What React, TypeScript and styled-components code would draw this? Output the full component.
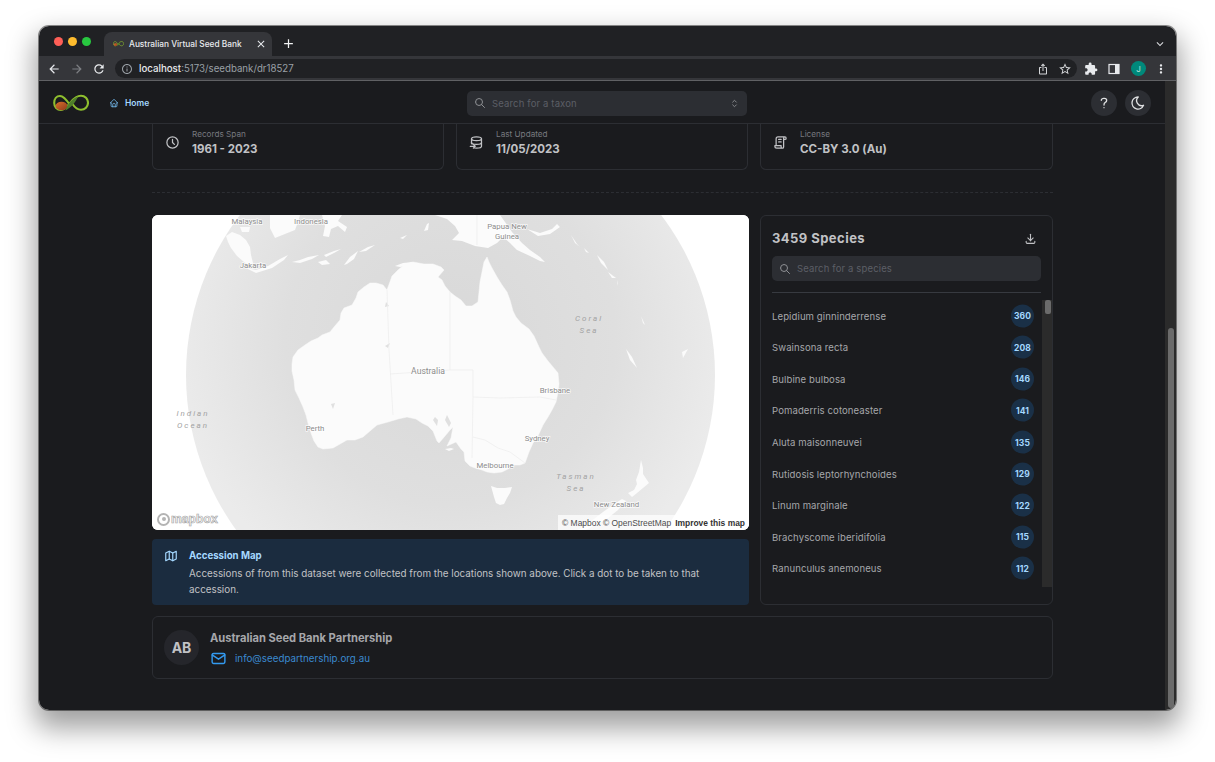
import styled, { createGlobalStyle } from 'styled-components';
import {
  TbClock,
  TbDownload,
  TbHome,
  TbLicense,
  TbMail,
  TbMap,
  TbMoon,
  TbQuestionMark,
  TbSearch,
  TbSelector,
} from 'react-icons/tb';
import {
  MdAdd,
  MdArrowBack,
  MdArrowForward,
  MdClose,
  MdExpandMore,
  MdExtension,
  MdInfoOutline,
  MdIosShare,
  MdMoreVert,
  MdRefresh,
  MdStarBorder,
} from 'react-icons/md';

const GlobalStyle = createGlobalStyle`
  html, body {
    margin: 0;
    height: 762px;
    overflow: hidden;
    background: #ffffff;
    font-family: Inter, 'Liberation Sans', sans-serif;
  }
`;

const Desktop = styled.div`
  padding: 26px 39px 0;
`;

const BrowserWindow = styled.div`
  width: 1137px;
  height: 684px;
  display: flex;
  flex-direction: column;
  border-radius: 10px;
  overflow: hidden;
  box-shadow: 0 14px 28px 4px rgba(0, 0, 0, 0.38), 0 0 0 1px rgba(70, 70, 70, 0.6);
`;

const TabStrip = styled.div`
  height: 30px;
  flex-shrink: 0;
  display: flex;
  align-items: flex-end;
  padding: 0 9px 0 14px;
  background: #202124;
`;

const Lights = styled.div`
  display: flex;
  gap: 5px;
  align-self: center;
  margin: 0 13.5px 0 0.5px;
`;

const Light = styled.span<{ color: string }>`
  width: 9px;
  height: 9px;
  border-radius: 50%;
  background: ${({ color }) => color};
`;

const Tab = styled.div`
  width: 168px;
  height: 24px;
  display: flex;
  align-items: center;
  gap: 5px;
  padding: 0 5px 0 9px;
  box-sizing: border-box;
  border-radius: 8px 8px 0 0;
  background: #35363a;
  color: #e8eaed;
  font-size: 8.3px;
  font-weight: 500;
  white-space: nowrap;

  svg {
    flex-shrink: 0;
  }

  svg:last-child {
    margin-left: auto;
    font-size: 12px;
  }
`;

const NewTab = styled.div`
  align-self: center;
  margin: 5px 0 0 9px;
  display: flex;
  color: #f1f3f4;
  font-size: 15px;
`;

const StripEnd = styled.div`
  margin-left: auto;
  align-self: center;
  display: flex;
  color: #d4d6d9;
  font-size: 14px;
  transform: translateY(3px);
`;

const Toolbar = styled.div`
  height: 25px;
  flex-shrink: 0;
  display: flex;
  align-items: center;
  padding: 1px 8px 0;
  background: #35363a;
  border-bottom: 1px solid #606164;
  box-sizing: border-box;
  color: #e8eaed;
`;

const NavIcon = styled.span<{ $dim?: boolean; $gap?: number }>`
  display: flex;
  font-size: 14px;
  margin-right: ${({ $gap }) => $gap ?? 0}px;
  color: ${({ $dim }) => ($dim ? '#7d7f83' : '#e8eaed')};
`;

const Omnibox = styled.div`
  width: 963px;
  height: 19px;
  display: flex;
  align-items: center;
  gap: 6px;
  box-sizing: border-box;
  padding: 0 5px 0 6px;
  margin-right: 7px;
  border-radius: 10px;
  background: #202124;
  font-size: 9.7px;
  color: #9aa0a6;

  b {
    font-weight: 500;
    color: #e8eaed;
  }
`;

const OmniEnd = styled.div`
  margin-left: auto;
  display: flex;
  align-items: center;
  gap: 9px;
  font-size: 12px;
  color: #d4d6d9;
`;

const Profile = styled.span`
  width: 15px;
  height: 15px;
  margin: 0 8px 0 1px;
  display: flex;
  align-items: center;
  justify-content: center;
  border-radius: 50%;
  background: #00897b;
  color: #b7e4dc;
  font-size: 8px;
`;

const Viewport = styled.div`
  flex: 1;
  min-height: 0;
  display: flex;
`;

const Page = styled.div`
  flex: 1;
  min-width: 0;
  display: flex;
  flex-direction: column;
  background: #1a1b1e;
  color: #c1c2c5;
`;

const Scrollbar = styled.div`
  width: 11px;
  display: flex;
  flex-direction: column;
  justify-content: flex-end;
  padding: 0 2px 2px 3px;
  box-sizing: border-box;
  background: #2b2b2b;
`;

const Thumb = styled.div`
  height: 380px;
  border-radius: 3px;
  background: #6b6b6b;
`;

const Header = styled.header`
  height: 43px;
  flex-shrink: 0;
  display: grid;
  grid-template-columns: 414px 280px 1fr;
  align-items: center;
  padding: 2px 14px 0;
  box-sizing: border-box;
  border-bottom: 1px solid #2c2e33;
`;

const HeaderLeft = styled.div`
  display: flex;
  align-items: center;
`;

const HomeLink = styled.a`
  display: flex;
  align-items: center;
  gap: 6px;
  margin-left: 20px;
  font-size: 8.5px;
  font-weight: 600;
  color: #a5d8ff;

  svg {
    font-size: 10px;
    color: #74b9ec;
  }
`;

const HeaderRight = styled.div`
  display: flex;
  justify-content: flex-end;
  gap: 8px;
`;

const RoundButton = styled.button`
  width: 26px;
  height: 26px;
  padding: 0;
  display: flex;
  align-items: center;
  justify-content: center;
  border: 0;
  border-radius: 50%;
  background: #2c2e33;
  color: #dfe0e2;
  font-size: 16px;
`;

const SearchBox = styled.div`
  height: 25px;
  display: flex;
  align-items: center;
  gap: 6px;
  padding: 0 7px;
  box-sizing: border-box;
  border-radius: 5px;
  background: #2c2e33;
  color: #8d8f93;
  font-size: 12px;

  > svg:last-child:not(:first-child) {
    margin-left: auto;
    font-size: 11px;
  }
`;

const Placeholder = styled.span`
  font-size: 9.5px;
  letter-spacing: 0.15px;
  color: #5c5f66;
`;

const Main = styled.main`
  flex: 1;
  min-height: 0;
  overflow: hidden;
  padding: 0 112px 0 113px;
`;

const Stats = styled.div`
  display: grid;
  grid-template-columns: 292px 292px 1fr;
  gap: 12px;
`;

const StatCard = styled.div`
  height: 46px;
  display: flex;
  align-items: center;
  gap: 12px;
  padding: 0 12px;
  box-sizing: border-box;
  border: 1px solid #2c2e33;
  border-top: 0;
  border-radius: 0 0 6px 6px;

  > svg {
    font-size: 15px;
    flex-shrink: 0;
    color: #c1c2c5;
    transform: translateY(-4px);
  }
`;

const StatText = styled.div`
  display: flex;
  flex-direction: column;
  gap: 2px;
  transform: translateY(-4.5px);
`;

const StatLabel = styled.span`
  font-size: 8.2px;
  line-height: 11px;
  color: #77797e;
`;

const StatValue = styled.span`
  font-size: 11.5px;
  line-height: 14px;
  font-weight: 700;
  color: #c1c2c5;
`;

const Divider = styled.hr`
  margin: 22px 0 22px;
  border: 0;
  border-top: 1px dashed #2c2e33;
`;

const Columns = styled.div`
  display: grid;
  grid-template-columns: 597px 293px;
  gap: 11px;
`;

const LeftColumn = styled.div`
  display: flex;
  flex-direction: column;
  gap: 9px;
`;

const MapFrame = styled.div`
  position: relative;
  height: 315px;
  border-radius: 6px;
  overflow: hidden;
  background: #ffffff;

  svg {
    display: block;
  }
`;

const MapLogo = styled.div`
  position: absolute;
  left: 5px;
  bottom: 4px;
  display: flex;
  align-items: center;
  gap: 1px;
  font-family: 'Liberation Sans', sans-serif;
  font-size: 12.2px;
  font-weight: 700;
  color: #ffffff;
  -webkit-text-stroke: 0.7px #a8a8a8;
`;

const MapLogoMark = styled.span`
  width: 9px;
  height: 9px;
  display: flex;
  align-items: center;
  justify-content: center;
  border-radius: 50%;
  border: 2px solid #b4b4b4;
  background: #ffffff;

  &::after {
    content: '';
    width: 4px;
    height: 4px;
    border-radius: 50%;
    background: #b4b4b4;
  }
`;

const Attribution = styled.div`
  position: absolute;
  right: 0;
  bottom: 0;
  height: 15px;
  display: flex;
  align-items: center;
  gap: 4px;
  padding: 0 4px;
  background: rgba(255, 255, 255, 0.7);
  font-family: 'Liberation Sans', sans-serif;
  font-size: 8.45px;
  color: #4d4d4d;

  b {
    color: #333333;
  }
`;

const Alert = styled.div`
  height: 66px;
  display: flex;
  gap: 11px;
  padding: 10px 12px;
  box-sizing: border-box;
  border-radius: 4px;
  background: #1b2c3f;

  > svg {
    font-size: 14px;
    color: #a5d8ff;
    flex-shrink: 0;
  }
`;

const AlertBody = styled.div`
  width: 530px;
`;

const AlertTitle = styled.div`
  font-size: 9.7px;
  line-height: 13px;
  font-weight: 700;
  color: #a5d8ff;
`;

const AlertText = styled.p`
  margin: 4px 0 0;
  font-size: 9.83px;
  line-height: 15.5px;
  color: #c1c2c5;
`;

const SpeciesPanel = styled.section`
  height: 390px;
  padding: 11px 11px 0;
  box-sizing: border-box;
  border: 1px solid #2c2e33;
  border-radius: 6px;
`;

const PanelHead = styled.div`
  height: 22px;
  margin-bottom: 7px;
  display: flex;
  align-items: center;
  justify-content: space-between;
  padding-right: 4px;

  svg {
    font-size: 13px;
    color: #c1c2c5;
  }
`;

const PanelTitle = styled.h2`
  margin: 0;
  font-size: 13px;
  font-weight: 700;
  letter-spacing: 0.45px;
  color: #c1c2c5;
`;

const PanelRule = styled.div`
  margin: 11px 0 7px;
  border-top: 1px solid #373a40;
`;

const ListArea = styled.div`
  height: 287px;
  margin-right: -11px;
  display: flex;
  justify-content: space-between;
`;

const SpeciesList = styled.ul`
  width: 262px;
  margin: 0.4px 0 0;
  padding: 0;
  list-style: none;
`;

const SpeciesRow = styled.li`
  height: 31.6px;
  display: flex;
  align-items: center;
  justify-content: space-between;
  font-size: 9.55px;
  letter-spacing: 0.1px;
  color: #a6a7ab;
`;

const CountBadge = styled.span`
  width: 23px;
  height: 23px;
  display: flex;
  align-items: center;
  justify-content: center;
  border-radius: 50%;
  background: #1a3047;
  color: #a5d8ff;
  font-size: 8.5px;
  font-weight: 700;
  transform: translateY(-0.5px);
`;

const ListTrack = styled.div`
  width: 10px;
  padding: 0 1px 0 3px;
  box-sizing: border-box;
  background: #2b2b2b;
`;

const ListThumb = styled.div`
  height: 14px;
  border-radius: 2px;
  background: #6b6b6b;
`;

const OwnerCard = styled.section`
  height: 63px;
  margin-top: 11px;
  display: flex;
  align-items: center;
  gap: 11px;
  padding: 0 11px;
  box-sizing: border-box;
  border: 1px solid #2c2e33;
  border-radius: 6px;
`;

const Avatar = styled.div`
  width: 35px;
  height: 35px;
  display: flex;
  align-items: center;
  justify-content: center;
  border-radius: 50%;
  background: #25262b;
  color: #c1c2c5;
  font-size: 14px;
  font-weight: 700;
`;

const OwnerInfo = styled.div`
  padding-top: 2px;
`;

const OwnerName = styled.div`
  font-size: 11.15px;
  line-height: 14px;
  font-weight: 700;
  color: #a6a7ab;
`;

const OwnerMail = styled.a`
  margin-top: 5px;
  display: flex;
  align-items: center;
  gap: 8px;
  font-size: 9.8px;
  color: #3b8ad0;

  svg {
    font-size: 17px;
    color: #339af0;
  }
`;

const SidePanelGlyph = () => (
  <svg width="12" height="12" viewBox="0 0 12 12">
    <rect x="1" y="1.5" width="10" height="9" fill="none" stroke="#e8eaed" strokeWidth="1.2" />
    <rect x="7" y="1.5" width="4" height="9" fill="#e8eaed" />
  </svg>
);

// tabler's newer database-import has its arrow on the right, the picture has it on the left
const DatabaseIcon = () => (
  <svg
    width="15"
    height="15"
    viewBox="0 0 24 24"
    fill="none"
    stroke="currentColor"
    strokeWidth="2"
    strokeLinecap="round"
    strokeLinejoin="round"
  >
    <ellipse cx="12" cy="6" rx="8" ry="3" />
    <path d="M4 6v6c0 1.600 3.600 3 8 3s8-1.400 8-3V6" />
    <path d="M20 12v6c0 1.600-3.600 3-8 3-1 0-2-.1-3-.2" />
    <path d="M4 12v2" />
    <path d="M2 18h8M7 15l3 3-3 3" />
  </svg>
);

const Logo = ({ width }: { width: number }) => (
  <svg width={width} viewBox="0 0 36 18">
    <defs>
      <linearGradient id={`seed-${width}`} x1="0" y1="0" x2="1" y2="1">
        <stop offset="0" stopColor="#d9702a" />
        <stop offset="1" stopColor="#8f3a1e" />
      </linearGradient>
    </defs>
    <path
      d="M17 11C13 5 10 2 7 2 3.500 2 1.200 5 1.200 9c0 4 2.800 7 6.800 7 3 0 6-3 10-8 3-4 6-6.300 10-6.300 4 0 7 3.300 7 7 0 3.800-3 7.100-7 7.100-3.500 0-6.500-2.800-8.500-5.800"
      fill="none"
      stroke="#8fbf2e"
      strokeWidth="2.1"
      strokeLinecap="round"
    />
    <ellipse cx="8.500" cy="12" rx="6" ry="4.300" fill={`url(#seed-${width})`} />
    <path d="M12.500 16.500C14 10 19 5 25 2.500 23 8 18 13.500 12.500 16.500Z" fill="#4f7f2a" />
  </svg>
);

const AUSTRALIA =
  'M387 290L383 285 376 283 370 283 364 287 358 292 356 298 352 305 344 308 341 313 340 320 334 327 330 332 322 335 318 338 311 341 305 345 298 350 293 357 292 364 292 371 294 380 295 390 299 398 303 407 306 415 308 423 311 433 314 441 318 447 323 449 333 448 340 444 347 440 355 440 363 437 370 431 377 425 388 422 398 419 407 417 416 419 422 423 428 426 433 431 437 441 439 443 445 436 450 430 453 427 451 438 447 446 456 442 461 449 464 452 465 461 470 466 475 468 482 470 487 472 494 473 502 472 508 469 513 465 520 465 525 463 529 452 533 443 538 436 543 425 548 417 552 410 556 402 558 392 559 384 558 373 553 367 548 361 542 353 539 347 534 336 529 329 521 323 516 317 513 311 510 300 507 292 502 285 497 277 492 268 489 262 487 257 484 262 482 272 480 282 479 292 478 302 472 306 466 306 461 300 455 296 450 292 445 286 442 280 438 277 444 270 441 267 433 264 424 264 413 262 405 264 398 270 392 276Z';

const LAND_SHAPES = [
  // Tasmania and the south coast islands
  'M491 486L497 488 505 488 512 487 510 493 507 498 504 504 500 505 496 503 494 497Z',
  'M445 449L451 448 454 449 449 451Z',
  // New Zealand
  'M641 460L643 468 643 474 649 483 643 488 637 493 632 497 628 493 634 490 637 484 636 480 639 472Z',
  'M622 499L626 501 618 510 608 518 597 524 586 530 578 530 590 522 603 512 614 504Z',
  // New Guinea and the islands beside it
  'M435 215L447 219 455 226 459 233 452 240 462 241 475 246 488 248 497 243 503 237 510 243 517 250 530 256 540 261 545 262 540 257 530 250 522 243 512 232 505 222 500 215Z',
  'M527 229L540 233 552 229 557 224 560 227 550 234 538 236Z',
  // Indonesia
  'M226 236L232 232 240 235 246 240 250 247 251 255 253 263 250 266 244 262 237 256 231 248 228 242Z',
  'M240 227L250 227 249 232 242 232Z',
  'M270 215L270 228 275 238 285 234 295 230 298 222 300 215Z',
  'M323 236L325 226 322 215 342 215 338 221 347 227 345 232 338 226 331 229 329 237Z',
  'M246 268L256 270 268 266 280 259 288 255 284 260 272 268 256 273Z',
  'M292 262L300 260 308 257 319 255 312 259 300 263Z',
  'M324 255L334 251 341 249 334 253 326 257Z',
  'M318 262L326 260 330 264 322 265Z',
  'M344 265L350 257 358 251 354 259 347 264Z',
  'M359 252L368 247 375 245 366 251Z',
  'M400 238L407 235 403 239Z',
  'M424 231L427 224 429 223 428 230Z',
  'M395 266L403 263 413 262 410 265 400 267Z',
  // Solomon and Pacific islands
  'M571 235L577 244 580 247 575 243Z',
  'M584 248L589 253 586 252Z',
  'M597 255L604 262 608 270 601 263Z',
  'M608 272L616 278 612 278Z',
  'M617 280L618 286 617 283Z',
  'M641 316L645 325 643 323Z',
  'M626 349L632 357 637 368 630 360Z',
  'M682 352L688 349 683 358Z',
];

const LAKES = [
  'M435 417L438 420 437 426 433 420Z',
  'M385 346L390 343 388 348Z',
  'M386 302L389 306 385 307Z',
  'M331 404L335 403 333 409Z',
  'M447 415L451 423 449 427 445 420Z',
];

const BORDERS = [
  'M477 215V245',
  'M387 290L389 350 393 415',
  'M390 374L450 370',
  'M450 292L450 370 473 370 473 397 472 458',
  'M473 397L500 398 540 397 556 400',
  'M473 437L485 440 498 448 510 452 525 463',
];

const MapLabel = styled.text<{ $ocean?: boolean; $size?: number }>`
  font-family: Roboto, 'Liberation Sans', sans-serif;
  font-size: ${({ $size }) => $size ?? 7.8}px;
  font-style: ${({ $ocean }) => ($ocean ? 'italic' : 'normal')};
  letter-spacing: ${({ $ocean }) => ($ocean ? '2px' : '0')};
  fill: ${({ $ocean }) => ($ocean ? '#a3a3a3' : '#8c8c8c')};
  text-anchor: middle;
  paint-order: stroke;
  stroke: ${({ $ocean }) => ($ocean ? 'none' : 'rgba(255, 255, 255, 0.8)')};
  stroke-width: 1.5px;
`;

const places: [string, number, number, number?][] = [
  ['Malaysia', 247, 224],
  ['Indonesia', 311, 224],
  ['Jakarta', 253, 268],
  ['Papua New', 507, 229],
  ['Guinea', 507, 238.5],
  ['Australia', 428, 373.5, 8.6],
  ['Perth', 315, 431],
  ['Brisbane', 555, 393],
  ['Sydney', 537, 441],
  ['Melbourne', 495, 468],
  ['New Zealand', 616.5, 506.5],
];

const seas: [string, number, number][] = [
  ['Indian', 193, 416],
  ['Ocean', 193, 428],
  ['Coral', 589, 321],
  ['Sea', 589, 333],
  ['Tasman', 576, 479],
  ['Sea', 576, 491],
];

const AustraliaMap = () => (
  <svg width="597" height="315" viewBox="152 215 597 315">
    <defs>
      <radialGradient id="ocean" cx="450" cy="340" r="275" gradientUnits="userSpaceOnUse">
        <stop offset="0" stopColor="#d8d8d8" />
        <stop offset="0.6" stopColor="#dfdfdf" />
        <stop offset="1" stopColor="#ebebeb" />
      </radialGradient>
    </defs>
    <rect x="152" y="215" width="597" height="315" fill="#ffffff" />
    <circle cx="450.5" cy="375" r="264.5" fill="url(#ocean)" />
    <path d={AUSTRALIA} fill="#fbfbfb" stroke="#fbfbfb" strokeWidth="0.5" strokeLinejoin="round" />
    {LAND_SHAPES.map(d => (
      <path key={d} d={d} fill="#fbfbfb" />
    ))}
    {LAKES.map(d => (
      <path key={d} d={d} fill="#e0e0e0" />
    ))}
    {BORDERS.map(d => (
      <path key={d} d={d} fill="none" stroke="#ececec" strokeWidth="0.7" />
    ))}
    {places.map(([name, x, y, size]) => (
      <MapLabel key={name} x={x} y={y} $size={size}>
        {name}
      </MapLabel>
    ))}
    {seas.map(([name, x, y]) => (
      <MapLabel key={name + y} x={x} y={y} $ocean $size={8}>
        {name}
      </MapLabel>
    ))}
  </svg>
);

const species: [string, number][] = [
  ['Lepidium ginninderrense', 360],
  ['Swainsona recta', 208],
  ['Bulbine bulbosa', 146],
  ['Pomaderris cotoneaster', 141],
  ['Aluta maisonneuvei', 135],
  ['Rutidosis leptorhynchoides', 129],
  ['Linum marginale', 122],
  ['Brachyscome iberidifolia', 115],
  ['Ranunculus anemoneus', 112],
];

const App = () => (
  <>
    <GlobalStyle />
    <Desktop>
      <BrowserWindow>
        <TabStrip>
          <Lights>
            <Light color="#ff5f57" />
            <Light color="#febc2e" />
            <Light color="#28c840" />
          </Lights>
          <Tab>
            <Logo width={11} />
            Australian Virtual Seed Bank
            <MdClose />
          </Tab>
          <NewTab>
            <MdAdd />
          </NewTab>
          <StripEnd>
            <MdExpandMore />
          </StripEnd>
        </TabStrip>
        <Toolbar>
          <NavIcon $gap={9}>
            <MdArrowBack />
          </NavIcon>
          <NavIcon $gap={8} $dim>
            <MdArrowForward />
          </NavIcon>
          <NavIcon $gap={9}>
            <MdRefresh />
          </NavIcon>
          <Omnibox>
            <MdInfoOutline size={12} />
            <span>
              <b>localhost</b>:5173/seedbank/dr18527
            </span>
            <OmniEnd>
              <MdIosShare />
              <MdStarBorder size={14} />
            </OmniEnd>
          </Omnibox>
          <NavIcon $gap={10}>
            <MdExtension />
          </NavIcon>
          <NavIcon $gap={10}>
            <SidePanelGlyph />
          </NavIcon>
          <Profile>J</Profile>
          <NavIcon>
            <MdMoreVert />
          </NavIcon>
        </Toolbar>
        <Viewport>
          <Page>
            <Header>
              <HeaderLeft>
                <Logo width={36} />
                <HomeLink>
                  <TbHome />
                  Home
                </HomeLink>
              </HeaderLeft>
              <SearchBox>
                <TbSearch />
                <Placeholder>Search for a taxon</Placeholder>
                <TbSelector />
              </SearchBox>
              <HeaderRight>
                <RoundButton aria-label="Help">
                  <TbQuestionMark />
                </RoundButton>
                <RoundButton aria-label="Theme">
                  <TbMoon />
                </RoundButton>
              </HeaderRight>
            </Header>
            <Main>
              <Stats>
                <StatCard>
                  <TbClock />
                  <StatText>
                    <StatLabel>Records Span</StatLabel>
                    <StatValue>1961 - 2023</StatValue>
                  </StatText>
                </StatCard>
                <StatCard>
                  <DatabaseIcon />
                  <StatText>
                    <StatLabel>Last Updated</StatLabel>
                    <StatValue>11/05/2023</StatValue>
                  </StatText>
                </StatCard>
                <StatCard>
                  <TbLicense />
                  <StatText>
                    <StatLabel>License</StatLabel>
                    <StatValue>CC-BY 3.0 (Au)</StatValue>
                  </StatText>
                </StatCard>
              </Stats>
              <Divider />
              <Columns>
                <LeftColumn>
                  <MapFrame>
                    <AustraliaMap />
                    <MapLogo>
                      <MapLogoMark />
                      mapbox
                    </MapLogo>
                    <Attribution>
                      <span>© Mapbox © OpenStreetMap</span>
                      <b>Improve this map</b>
                    </Attribution>
                  </MapFrame>
                  <Alert>
                    <TbMap />
                    <AlertBody>
                      <AlertTitle>Accession Map</AlertTitle>
                      <AlertText>
                        Accessions of from this dataset were collected from the locations shown
                        above. Click a dot to be taken to that accession.
                      </AlertText>
                    </AlertBody>
                  </Alert>
                </LeftColumn>
                <SpeciesPanel>
                  <PanelHead>
                    <PanelTitle>3459 Species</PanelTitle>
                    <TbDownload />
                  </PanelHead>
                  <SearchBox>
                    <TbSearch />
                    <Placeholder>Search for a species</Placeholder>
                  </SearchBox>
                  <PanelRule />
                  <ListArea>
                    <SpeciesList>
                      {species.map(([name, count]) => (
                        <SpeciesRow key={name}>
                          {name}
                          <CountBadge>{count}</CountBadge>
                        </SpeciesRow>
                      ))}
                    </SpeciesList>
                    <ListTrack>
                      <ListThumb />
                    </ListTrack>
                  </ListArea>
                </SpeciesPanel>
              </Columns>
              <OwnerCard>
                <Avatar>AB</Avatar>
                <OwnerInfo>
                  <OwnerName>Australian Seed Bank Partnership</OwnerName>
                  <OwnerMail>
                    <TbMail />
                    info@seedpartnership.org.au
                  </OwnerMail>
                </OwnerInfo>
              </OwnerCard>
            </Main>
          </Page>
          <Scrollbar>
            <Thumb />
          </Scrollbar>
        </Viewport>
      </BrowserWindow>
    </Desktop>
  </>
);

export default App;
